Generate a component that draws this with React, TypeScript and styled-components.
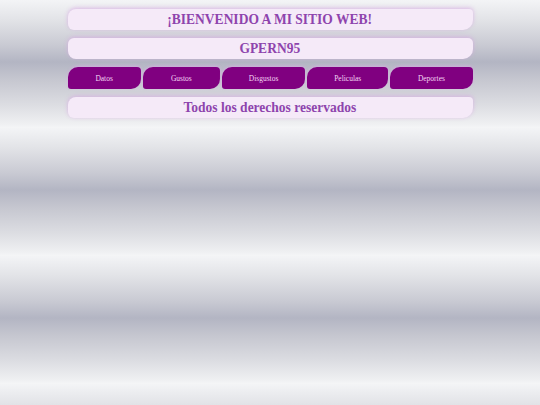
import React from 'react';
import styled, { createGlobalStyle } from 'styled-components';

const GlobalStyle = createGlobalStyle`
  html, body {
    margin: 0;
    padding: 0;
  }
  body {
    min-height: 405px;
    font-family: 'Liberation Serif', 'Times New Roman', serif;
    background: repeating-linear-gradient(
      180deg,
      #f3f4f6 0px,
      #e2e3e7 20px,
      #c9cad3 45px,
      #b3b5c3 62px,
      #c6c7d0 80px,
      #dcdde2 105px,
      #eff0f2 124px,
      #f5f6f7 128px
    );
  }
`;

const Page = styled.div`
  width: 75%;
  margin: 0 auto;
  padding-top: 9px;
  display: flex;
  flex-direction: column;
  gap: 8px;
`;

const Banner = styled.div<{ $radius: string }>`
  height: 21px;
  display: flex;
  align-items: center;
  justify-content: center;
  background: #f5eaf8;
  border-radius: ${(p) => p.$radius};
  box-shadow: 0 -1px 4px 0 rgba(214, 170, 226, 0.8);
`;

// the heading type in the original is a touch condensed
const Heading = styled.span`
  display: inline-block;
  color: #8e44ad;
  font-family: 'Liberation Serif', 'Times New Roman', serif;
  font-weight: bold;
  font-size: 15px;
  line-height: 1;
  white-space: nowrap;
  transform: scaleX(0.9);
`;

const Nav = styled.nav`
  display: flex;
  gap: 2px;
  height: 22px;
`;

const NavItem = styled.a<{ $grow: number }>`
  flex: ${(p) => p.$grow} 1 0;
  display: flex;
  align-items: center;
  justify-content: center;
  background: #800080;
  color: #f3d6f3;
  font-family: 'Liberation Serif', 'Times New Roman', serif;
  font-size: 7.5px;
  text-decoration: none;
  border-radius: 10px 4px 10px 3px;
  box-shadow: 0 -1px 3px 0 rgba(214, 170, 226, 0.8);
`;

const links = [
  { label: 'Datos', grow: 74 },
  { label: 'Gustos', grow: 78 },
  { label: 'Disgustos', grow: 84 },
  { label: 'Peliculas', grow: 82 },
  { label: 'Deportes', grow: 83 },
];

export default function App() {
  return (
    <>
      <GlobalStyle />
      <Page>
        <Banner $radius="8px 4px 10px 6px">
          <Heading>¡BIENVENIDO A MI SITIO WEB!</Heading>
        </Banner>
        <Banner $radius="6px 5px 10px 8px">
          <Heading>GPERN95</Heading>
        </Banner>
        <Nav>
          {links.map((l) => (
            <NavItem key={l.label} href="#" $grow={l.grow}>
              {l.label}
            </NavItem>
          ))}
        </Nav>
        <Banner $radius="8px 4px 10px 6px">
          <Heading>Todos los derechos reservados</Heading>
        </Banner>
      </Page>
    </>
  );
}
